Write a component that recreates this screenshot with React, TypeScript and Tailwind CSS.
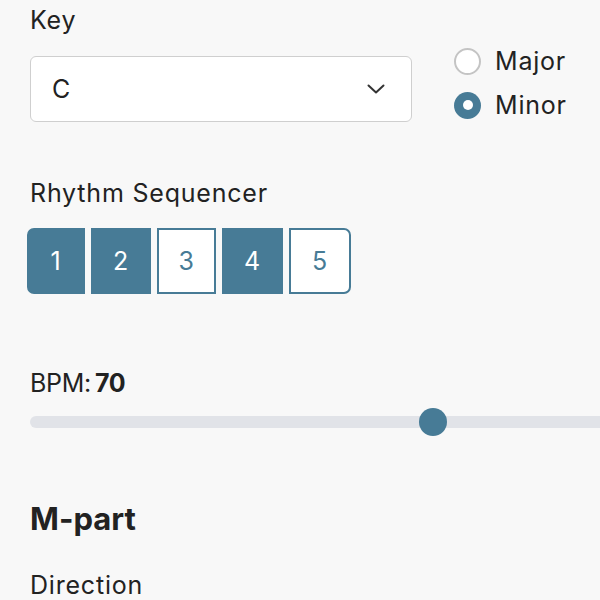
import { useState } from 'react'

const BLUE = '#477b96'

function Chevron() {
  return (
    <svg width="18" height="10" viewBox="0 0 18 10" fill="none">
      <path d="M1.5 1.5 L9 8.5 L16.5 1.5" stroke="#333" strokeWidth="2" strokeLinecap="round" strokeLinejoin="round" />
    </svg>
  )
}

function Radio({ checked, label }: { checked: boolean; label: string }) {
  return (
    <label className="flex items-center gap-[14px] h-[44px]">
      {checked ? (
        <span className="w-[27px] h-[27px] rounded-full bg-[#477b96] flex items-center justify-center">
          <span className="w-[10px] h-[10px] rounded-full bg-white" />
        </span>
      ) : (
        <span className="w-[27px] h-[27px] rounded-full border-2 border-[#c4c4c4] bg-white" />
      )}
      <span>{label}</span>
    </label>
  )
}

const steps = [
  { n: 1, on: true, w: 'w-[58px]', cls: 'rounded-l-[7px]' },
  { n: 2, on: true, w: 'w-[60px]', cls: '' },
  { n: 3, on: false, w: 'w-[59px]', cls: '' },
  { n: 4, on: true, w: 'w-[61px]', cls: '' },
  { n: 5, on: false, w: 'w-[62px]', cls: 'rounded-r-[7px]' },
]

export default function App() {
  const [bpm] = useState(70)
  const thumb = 403 // thumb center offset from track start

  return (
    <div
      className="h-[600px] w-[600px] overflow-hidden bg-[#f8f8f8] text-[#222] text-[25px] leading-[36px] tracking-[0.8px] pl-[30px]"
      style={{ fontFamily: 'Inter, "Noto Sans", sans-serif' }}
    >
      <div className="pt-[2px]">Key</div>

      <div className="flex items-start mt-[18px]">
        <div className="w-[382px] h-[66px] bg-white border border-[#cfcfcf] rounded-[6px] flex items-center justify-between pl-[21px] pr-[26px]">
          <span>C</span>
          <Chevron />
        </div>
        <div className="ml-[42px] -mt-[17px] flex flex-col">
          <Radio checked={false} label="Major" />
          <Radio checked={true} label="Minor" />
        </div>
      </div>

      <div className="mt-[48px]">Rhythm Sequencer</div>

      <div className="flex gap-[6px] mt-[17px] -ml-[3px]">
        {steps.map((s) => (
          <div
            key={s.n}
            className={`${s.w} h-[66px] flex items-center justify-center border-2 border-[#477b96] ${s.cls} ${
              s.on ? 'bg-[#477b96] text-white' : 'bg-white text-[#477b96]'
            }`}
          >
            {s.n}
          </div>
        ))}
      </div>

      <div className="mt-[71px] tracking-[-0.3px]">
        BPM:<span className="ml-[4px] font-bold">{bpm}</span>
      </div>

      <div className="relative mt-[7px] h-[28px] w-[640px] flex items-center">
        <div className="w-full h-[12px] rounded-full bg-[#e1e3e8]" />
        <div
          className="absolute top-0 w-[28px] h-[28px] rounded-full"
          style={{ left: thumb - 14, backgroundColor: BLUE }}
        />
      </div>

      <div className="mt-[61px] text-[31px] leading-[44px] tracking-normal font-bold">M-part</div>

      <div className="mt-[30px] leading-[28px]">Direction</div>
    </div>
  )
}
